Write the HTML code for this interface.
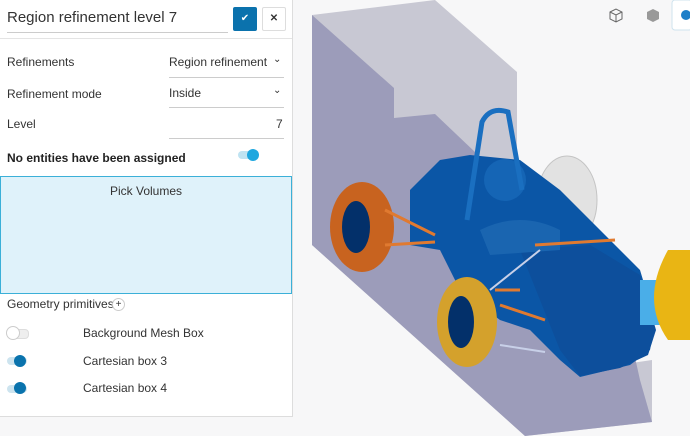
<!DOCTYPE html><html><head><style>
body{margin:0;width:690px;height:436px;overflow:hidden;background:#f7f7f8;font-family:"Liberation Sans",sans-serif;position:relative;color:#333}
.p{position:absolute;left:0;top:0;width:292px;height:416px;background:#fff;border-right:1px solid #ddd;border-bottom:1px solid #ddd}
.a{position:absolute;font-size:12px;white-space:nowrap}
.u{position:absolute;height:1px;background:#ccc}
.tg{position:absolute;width:20px;height:8px;border-radius:4px}
.kn{position:absolute;width:12px;height:12px;border-radius:50%}
</style></head><body>
<svg style="position:absolute;left:0;top:0" width="690" height="436">
<polygon points="312,15 435,0 517,72 517,380 652,360 652,422 525,436 312,245" fill="#c8c8d3"/>
<polygon points="312,15 394,88 394,118 435,114 620,290 640,380 652,422 525,436 312,245" fill="#9c9cba"/>
<ellipse cx="567" cy="200" rx="30" ry="44" fill="#e2e2e2" stroke="#c4c4c4"/>
<path d="M410,190 L440,160 L470,155 L520,160 L560,190 L600,230 L640,270 L655,320 L650,350 L630,365 L580,377 L560,360 L530,330 L500,320 L460,290 L450,270 L440,250 L410,245 Z" fill="#0b56a6"/>
<path d="M520,250 L590,245 L640,275 L656,330 L648,355 L620,368 L580,376 L560,350 L540,300 Z" fill="#0d4f9c"/>
<path d="M480,230 Q520,210 560,230 L560,250 L490,255Z" fill="#1a65b0"/>
<rect x="640" y="280" width="22" height="45" fill="#4aaee8"/>
<circle cx="505" cy="180" r="21" fill="#1565b5"/>
<path d="M467,220 L482,122 Q490,106 508,112 L522,190" stroke="#1a6fc0" stroke-width="5" fill="none"/>
<ellipse cx="362" cy="227" rx="32" ry="45" fill="#c8631f"/>
<ellipse cx="356" cy="227" rx="14" ry="26" fill="#03306a"/>
<ellipse cx="467" cy="322" rx="30" ry="45" fill="#d4a12c"/>
<ellipse cx="461" cy="322" rx="13" ry="26" fill="#03306a"/>
<path d="M668,250 L690,250 L690,340 L668,340 Q640,300 668,250Z" fill="#e9b514"/>
<path d="M385,210 L435,235 M385,245 L435,242 M500,305 L545,320 M495,290 L520,290 M535,245 L615,240" stroke="#e07a30" stroke-width="3"/>
<path d="M490,290 L540,250 M500,345 L545,352" stroke="#c8d0e8" stroke-width="2"/>
</svg>
<svg style="position:absolute;left:600px;top:0" width="90" height="32">
<path d="M10,12 L16,9 L22,12 L22,19 L16,22 L10,19Z M10,12 L16,15 L22,12 M16,15 L16,22" stroke="#666" fill="none" stroke-width="1"/>
<path d="M47,12 L53,9 L59,12 L59,19 L53,22 L47,19Z" fill="#999"/>
<rect x="72" y="0" width="20" height="30" rx="3" fill="#fff" stroke="#cfe3ee"/>
<circle cx="86" cy="15" r="5" fill="#1e7fc8"/>
</svg>
<div class="p">
<div class="a" style="left:7px;top:9px;font-size:15px;color:#333">Region refinement level 7</div>
<div class="u" style="left:7px;top:32px;width:221px"></div>
<div style="position:absolute;left:233px;top:7px;width:24px;height:24px;background:#0b72ad;border-radius:2px;color:#fff;text-align:center;line-height:24px;font-size:10px">✔</div>
<div style="position:absolute;left:262px;top:7px;width:22px;height:22px;border:1px solid #ddd;border-radius:2px;text-align:center;line-height:22px;font-size:10px;font-weight:bold">✕</div>
<div class="u" style="left:0;top:38px;width:292px;background:#e4e4e4"></div>
<div class="a" style="left:7px;top:55px">Refinements</div>
<div class="a" style="left:169px;top:55px">Region refinement</div><div class="a" style="left:273px;top:54px;font-size:10px">⌄</div>
<div class="u" style="left:169px;top:77px;width:115px"></div>
<div class="a" style="left:7px;top:87px">Refinement mode</div>
<div class="a" style="left:169px;top:86px">Inside</div><div class="a" style="left:273px;top:85px;font-size:10px">⌄</div>
<div class="u" style="left:169px;top:107px;width:115px"></div>
<div class="a" style="left:7px;top:117px">Level</div>
<div class="a" style="left:276px;top:117px">7</div>
<div class="u" style="left:169px;top:138px;width:115px"></div>
<div class="a" style="left:7px;top:151px;font-weight:bold;color:#222">No entities have been assigned</div>
<div class="tg" style="left:238px;top:151px;background:#bfe3f2"></div><div class="kn" style="left:247px;top:149px;background:#1ea7df"></div>
<div style="position:absolute;left:0;top:176px;width:290px;height:116px;background:#dff2fa;border:1px solid #3bb0d8"></div>
<div class="a" style="left:0;width:292px;text-align:center;top:184px">Pick Volumes</div>
<div class="a" style="left:7px;top:297px">Geometry primitives</div>
<div style="position:absolute;left:112px;top:298px;width:11px;height:11px;border:1px solid #ccc;border-radius:50%;font-size:10px;text-align:center;line-height:11px;background:#fff">+</div>
<div class="tg" style="left:7px;top:329px;background:#eee;border:1px solid #ddd"></div><div class="kn" style="left:6px;top:326px;background:#fff;border:1px solid #ccc"></div>
<div class="a" style="left:83px;top:326px">Background Mesh Box</div>
<div class="tg" style="left:7px;top:357px;background:#cde4ef"></div><div class="kn" style="left:14px;top:355px;background:#0a73ad"></div>
<div class="a" style="left:83px;top:354px">Cartesian box 3</div>
<div class="tg" style="left:7px;top:385px;background:#cde4ef"></div><div class="kn" style="left:14px;top:382px;background:#0a73ad"></div>
<div class="a" style="left:83px;top:381px">Cartesian box 4</div>
</div>
</body></html>
